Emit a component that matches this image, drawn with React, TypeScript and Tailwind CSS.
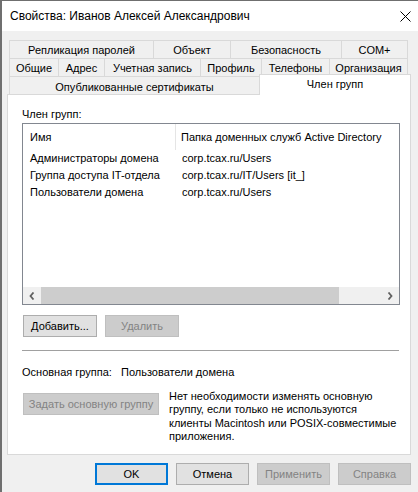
import React from 'react';

const font = "font-['Liberation_Sans','Noto_Sans',sans-serif]";

const row1 = [
  { label: 'Репликация паролей', w: 'w-[144px]' },
  { label: 'Объект', w: 'w-[77px]' },
  { label: 'Безопасность', w: 'w-[111px]' },
  { label: 'COM+', w: 'w-[67px]' },
];

const row2 = [
  { label: 'Общие', w: 'w-[49px]' },
  { label: 'Адрес', w: 'w-[46px]' },
  { label: 'Учетная запись', w: 'w-[96px]' },
  { label: 'Профиль', w: 'w-[61px]' },
  { label: 'Телефоны', w: 'w-[68px]' },
  { label: 'Организация', w: 'w-[79px]' },
];

const groups = [
  { name: 'Администраторы домена', folder: 'corp.tcax.ru/Users' },
  { name: 'Группа доступа IT-отдела', folder: 'corp.tcax.ru/IT/Users [it_]' },
  { name: 'Пользователи домена', folder: 'corp.tcax.ru/Users' },
];

function TitleBar() {
  return (
    <div className="h-[30px] bg-white flex items-center justify-between pl-[8px] pr-[7px] shrink-0">
      <span className="text-[12px] leading-[16px] text-black">Свойства: Иванов Алексей Александрович</span>
      <svg width="11" height="11" viewBox="0 0 11 11" className="block">
        <path d="M0.5 0.5 L10.5 10.5 M10.5 0.5 L0.5 10.5" stroke="#000" strokeWidth="1" fill="none" />
      </svg>
    </div>
  );
}

function TabRow({ tabs }: { tabs: { label: string; w: string }[] }) {
  return (
    <div className="flex h-[18px] ml-[2px]">
      {tabs.map((t, i) => (
        <div
          key={t.label}
          className={`${t.w} h-[18px] flex items-center justify-center border-t border-l border-[#d9d9d9] bg-[#f0f0f0] pt-[1px] leading-[15px] ${i === tabs.length - 1 ? 'border-r' : ''}`}
        >
          {t.label}
        </div>
      ))}
    </div>
  );
}

function Tabs() {
  return (
    <div className="flex flex-col">
      <TabRow tabs={row1} />
      <TabRow tabs={row2} />
      <div className="flex items-end h-[20px] -mt-[2px] ml-[2px]">
        <div className="w-[250px] h-[18px] flex items-center justify-center border-t border-l border-[#d9d9d9] bg-[#f0f0f0] pt-[3px] leading-[15px]">
          Опубликованные сертификаты
        </div>
        <div className="relative z-10 w-[152px] h-[21px] -mb-[1px] flex justify-center border-t border-l border-r border-[#d9d9d9] bg-white pt-[2px] leading-[15px]">
          Член групп
        </div>
      </div>
    </div>
  );
}

function Chevron({ dir }: { dir: 'left' | 'right' }) {
  return (
    <svg width="6" height="8" viewBox="0 0 6 8" className="block">
      <path
        d={dir === 'left' ? 'M4.5 0.5 L1.5 4 L4.5 7.5' : 'M1.5 0.5 L4.5 4 L1.5 7.5'}
        stroke="#606060"
        strokeWidth="1.8"
        fill="none"
      />
    </svg>
  );
}

function GroupList() {
  return (
    <div className="w-[378px] h-[182px] border border-[#828790] bg-white flex flex-col mt-[1px]">
      <div className="flex h-[26px] shrink-0">
        <div className="w-[153px] border-r border-[#e5e5e5] pl-[7px] flex items-center leading-[15px]">Имя</div>
        <div className="pl-[5px] flex items-center leading-[15px]">Папка доменных служб Active Directory</div>
      </div>
      {groups.map(g => (
        <div key={g.name} className="flex h-[17px] items-center leading-[15px]">
          <div className="w-[154px] pl-[7px]">{g.name}</div>
          <div className="pl-[5px]">{g.folder}</div>
        </div>
      ))}
      <div className="flex-1" />
      <div className="flex h-[17px] bg-[#f0f0f0] shrink-0">
        <div className="w-[18px] flex items-center justify-center">
          <Chevron dir="left" />
        </div>
        <div className="w-[298px] bg-[#cdcdcd]" />
        <div className="flex-1" />
        <div className="w-[18px] flex items-center justify-center">
          <Chevron dir="right" />
        </div>
      </div>
    </div>
  );
}

function Button({ label, disabled, primary, className = '' }: { label: string; disabled?: boolean; primary?: boolean; className?: string }) {
  const look = disabled
    ? 'bg-[#cccccc] border border-[#bfbfbf] text-[#838383]'
    : primary
      ? 'bg-[#e1e1e1] border-2 border-[#0078d7] text-black'
      : 'bg-[#e1e1e1] border border-[#adadad] text-black';
  return (
    <div className={`h-[22px] flex items-center justify-center leading-[15px] ${look} ${className}`}>
      {label}
    </div>
  );
}

function Panel() {
  return (
    <div className="w-[404px] h-[361px] bg-white border border-[#d9d9d9] flex flex-col pl-[14px]">
      <div className="mt-[12px] leading-[15px]">Член групп:</div>
      <GroupList />
      <div className="flex gap-[8px] mt-[10px] ml-[1px]">
        <Button label="Добавить..." className="w-[74px]" />
        <Button label="Удалить" disabled className="w-[74px]" />
      </div>
      <div className="w-[377px] h-px bg-[#a0a0a0] mt-[13px]" />
      <div className="flex mt-[14px] leading-[15px]">
        <span className="w-[99px]">Основная группа:</span>
        <span>Пользователи домена</span>
      </div>
      <div className="flex items-start mt-[10px] ml-[1px]">
        <Button label="Задать основную группу" disabled className="w-[136px] mt-[3px]" />
        <p className="ml-[10px] leading-[13.3px]">
          Нет необходимости изменять основную
          <br />
          группу, если только не используются
          <br />
          клиенты Macintosh или POSIX-совместимые
          <br />
          приложения.
        </p>
      </div>
    </div>
  );
}

export default function App() {
  return (
    <div className={`w-[418px] h-[492px] border-l-2 border-t border-[#6f6f6f] bg-[#f0f0f0] flex flex-col text-[11px] text-black ${font}`}>
      <TitleBar />
      <div className="flex flex-col pl-[5px] pt-[9px]">
        <Tabs />
        <Panel />
        <div className="flex justify-end gap-[8px] mt-[8px] pr-[7px]">
          <Button label="OK" primary className="w-[73px]" />
          <Button label="Отмена" className="w-[73px]" />
          <Button label="Применить" disabled className="w-[73px]" />
          <Button label="Справка" disabled className="w-[73px]" />
        </div>
      </div>
    </div>
  );
}
